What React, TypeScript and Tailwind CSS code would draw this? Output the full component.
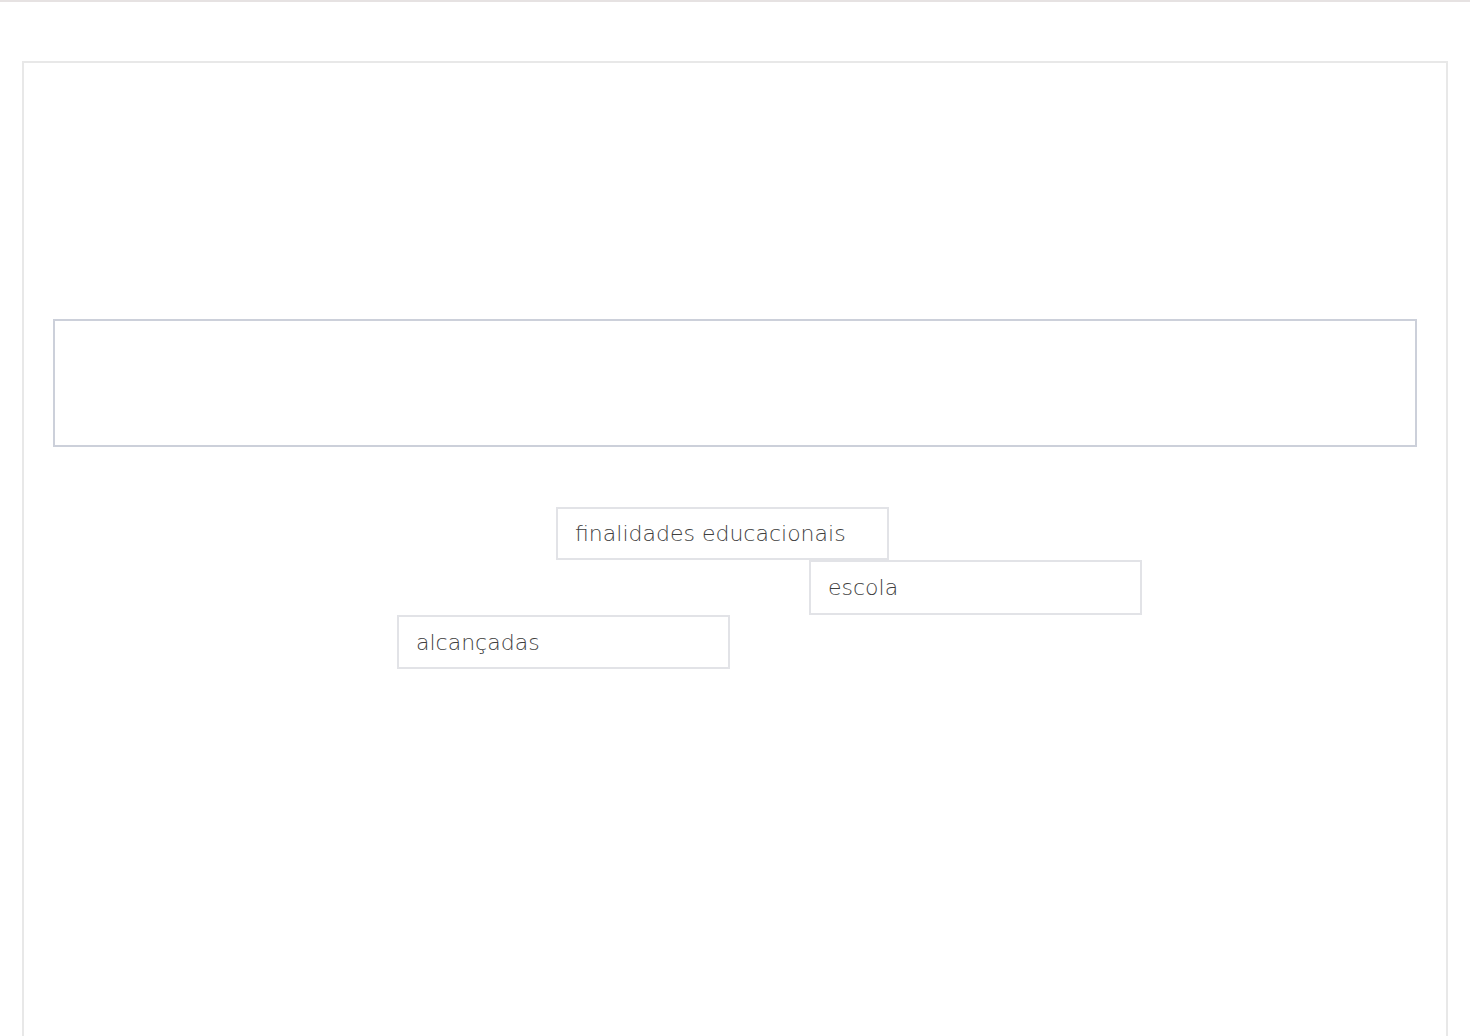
import React from "react";

const chips = [
  { text: "finalidades educacionais", left: 532, top: 444, h: 53 },
  { text: "escola", left: 785, top: 497, h: 55 },
  { text: "alcançadas", left: 373, top: 552, h: 54 },
];

export default function App() {
  return (
    <div className="w-[1470px] h-[1036px] overflow-hidden bg-white relative" style={{ fontFamily: '"DejaVu Sans", "Liberation Sans", sans-serif' }}>
      <div className="h-[2px] bg-[#e6e2e2]" />
      <div className="relative ml-[22px] mt-[59px] w-[1426px] h-[1000px] border-2 border-[#e8e8e8] pt-[256px] px-[29px]">
        <div className="h-[128px] border-2 border-[#ccd0da]" />
        {chips.map((c) => (
          <div
            key={c.text}
            className="absolute w-[333px] border-2 border-[#e2e3e7] bg-white flex items-center pl-[17px] text-[22px] font-extralight text-[#3f3f3f]"
            style={{ left: c.left, top: c.top, height: c.h }}
          >
            {c.text}
          </div>
        ))}
      </div>
    </div>
  );
}
